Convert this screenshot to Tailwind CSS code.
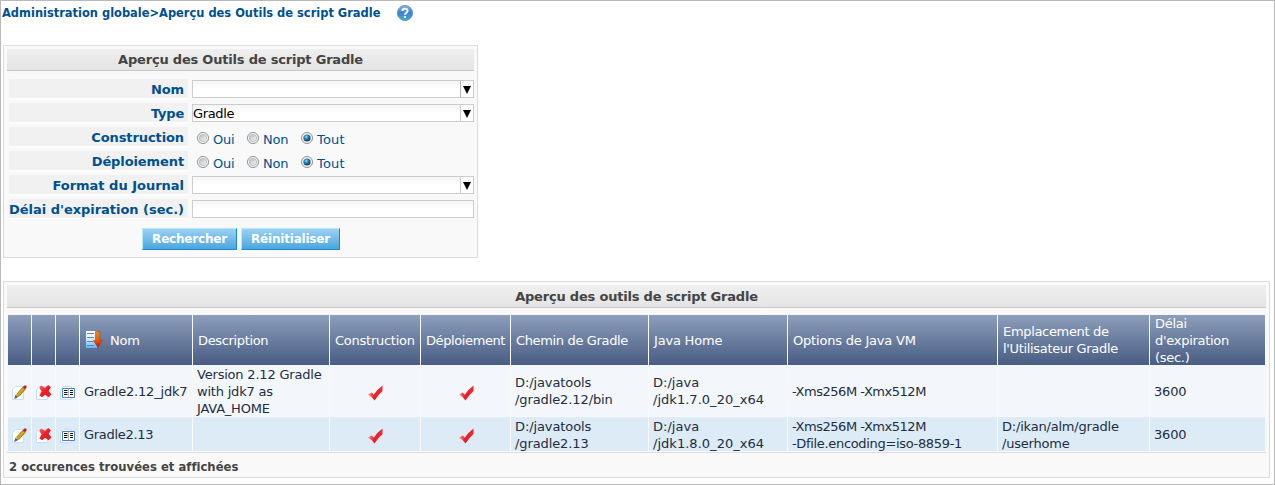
<!DOCTYPE html>
<html lang="fr">
<head>
<meta charset="utf-8">
<title>Aperçu des Outils de script Gradle</title>
<script src="https://cdn.jsdelivr.net/npm/@tailwindcss/browser@4"></script>
</head>
<body class="bg-white">
<svg class="block size-0">
  <defs>
    <linearGradient id="help" x1="0" y1="0" x2="0" y2="1"><stop offset="0" stop-color="#7fb4e4"/><stop offset=".5" stop-color="#3a83c8"/><stop offset="1" stop-color="#35b4ea"/></linearGradient>
    <linearGradient id="sheet" x1="0" y1="0" x2="0" y2="1"><stop offset="0" stop-color="#fff"/><stop offset=".4" stop-color="#e4f2fd"/><stop offset="1" stop-color="#62b5f5"/></linearGradient>
    <linearGradient id="arrow" x1="0" y1="0" x2="0" y2="1"><stop offset="0" stop-color="#e88a10"/><stop offset=".5" stop-color="#e8600a"/><stop offset="1" stop-color="#c81800"/></linearGradient>
    <linearGradient id="tick" x1="0" y1="0" x2="1" y2="0"><stop offset="0" stop-color="#f0a0a0"/><stop offset=".4" stop-color="#ee1c24"/><stop offset="1" stop-color="#ee2a30"/></linearGradient>
    <linearGradient id="cross" x1="0" y1="0" x2="1" y2="1"><stop offset="0" stop-color="#f06a6a"/><stop offset=".5" stop-color="#ee1c24"/><stop offset="1" stop-color="#d8282c"/></linearGradient>
    <linearGradient id="ring" x1="0" y1="0" x2="1" y2="1"><stop offset="0" stop-color="#b8bcc2"/><stop offset="1" stop-color="#f4f4f4"/></linearGradient>
    <radialGradient id="dot" cx=".4" cy=".35" r=".7"><stop offset="0" stop-color="#8fe0fa"/><stop offset=".4" stop-color="#2383b5"/><stop offset="1" stop-color="#0b2c50"/></radialGradient>
    <symbol id="i-edit" viewBox="0 0 16 16"><path d="M3.500 1.500h8v13h-11v-10z" fill="#fff" stroke="#c5e0f2"/><path d="M2.200 13.800l1.300-4 2.700 2-2 1.400z" fill="#6b5a48"/><path d="M4.600 9.300L10.800 2.300l2.300 2.200-6.200 7z" fill="#dba514" stroke="#8a6410" stroke-width=".8"/><path d="M10.800 2.300L12.300.500h2.200v2L13 4.400z" fill="#b3282d"/></symbol>
    <symbol id="i-del" viewBox="0 0 16 16"><path d="M3.500 1.500h8v13h-11v-10z" fill="#fff" stroke="#c5e0f2"/><path d="M5 .500l4 2.300L12.200 0l2.800 2.300-2.400 3.500 2.900 3.600-2.900 2.900-3.500-2.500-3 2.500-2.800-1.900L5.500 6.300 3.200 3z" fill="url(#cross)"/></symbol>
    <symbol id="i-book" viewBox="0 0 16 16"><path d="M3.500 1.500h8v13h-11v-10z" fill="#fff" stroke="#c5e0f2"/><path d="M2.500 3.500h12v9h-12z" fill="#fff" stroke="#4f7fc4"/><path d="M4 5.500h3.500M4 7.500h3.500M4 9.500h3.500M10 5.500h3M10 7.500h3M10 9.500h3" stroke="#111" stroke-width="1.200"/><path d="M8.500 4v8" stroke="#b9b4a4"/></symbol>
    <symbol id="i-tick" viewBox="0 0 16 16"><path d="M1 9.500L4.800 7.500l2 2.200Q10 4.500 15.500.500v5.500Q11.500 9.500 7.500 15.500Q4.500 11.500 1 9.500z" fill="url(#tick)"/></symbol>
    <symbol id="i-radio" viewBox="0 0 12 12"><circle cx="6" cy="6" r="5.500" fill="#fbfbfb" stroke="#8e8f8f"/><circle cx="6" cy="6" r="3.700" fill="url(#ring)" stroke="#b4b8bc" stroke-width=".8"/></symbol>
    <symbol id="i-radio-on" viewBox="0 0 12 12"><circle cx="6" cy="6" r="5.500" fill="#f4f4f4" stroke="#8e8f8f"/><circle cx="6" cy="6" r="3.600" fill="url(#dot)"/></symbol>
  </defs>
</svg>
<div class="w-[1275px] h-[485px] border border-[#b9b9b9] pl-[2px] font-['DejaVu_Sans',sans-serif] text-[13px] leading-[17px] tracking-[-0.2px] overflow-hidden whitespace-nowrap">
  <div class="flex h-[44px] items-start text-[11.45px] font-bold text-[#00508f] tracking-normal">
    <span class="mt-[4px] -ml-px w-[380px]">Administration globale&gt;Aperçu des Outils de script Gradle</span>
    <svg class="ml-[15px] mt-[4px] size-4" viewBox="0 0 16 16"><circle cx="8" cy="8" r="7.600" fill="url(#help)" stroke="#5d86ae" stroke-width=".8"/><path d="M5.500 6Q5.500 3.800 8 3.800T10.500 6Q10.500 7.200 9.200 7.900Q8 8.600 8 9.700" fill="none" stroke="#fff" stroke-width="2"/><path d="M7 11h2v2H7z" fill="#fff"/></svg>
  </div>

  <section class="w-[475px] h-[213px] border border-[#dcdcdc] bg-[#f9f9f9] p-[3px] text-[#00508f]">
    <h1 class="h-[22px] border-b border-[#c8c8c8] bg-linear-to-b from-[#efefef] to-[#e4e4e4] text-center font-bold text-[#444] leading-[21px]">Aperçu des Outils de script Gradle</h1>
    <div class="mt-[8px] ml-[2px] grid grid-cols-[179px_282px] gap-x-[4px] auto-rows-[24px]">
      <div class="h-[20px] border-b border-white bg-[#f1f1f1] pr-[4px] text-right font-bold leading-[21px] tracking-[-0.1px]">Nom</div>
      <div class="mt-px h-[18px] flex border border-[#ccc] bg-linear-to-b from-[#f5f5f5] to-white to-50%"><span class="flex-1"></span><span class="w-[13px] border-l border-[#b5b5b5] bg-white pl-[2px] pt-[5px]"><svg class="w-[8px] h-[8px]" viewBox="0 0 8 8"><path d="M0 0h8L4 8z"/></svg></span></div>
      <div class="h-[20px] border-b border-white bg-[#f1f1f1] pr-[4px] text-right font-bold leading-[21px] tracking-[-0.2px]">Type</div>
      <div class="mt-px h-[18px] flex border border-[#ccc] bg-linear-to-b from-[#f5f5f5] to-white to-50%"><span class="flex-1 text-black leading-[18px] tracking-[-0.35px]">Gradle</span><span class="w-[13px] border-l border-[#ccc] bg-white pl-[2px] pt-[5px]"><svg class="w-[8px] h-[8px]" viewBox="0 0 8 8"><path d="M0 0h8L4 8z"/></svg></span></div>
      <div class="h-[20px] border-b border-white bg-[#f1f1f1] pr-[4px] text-right font-bold leading-[21px] tracking-[-0.1px]">Construction</div>
      <div class="grid grid-cols-[50px_54px_auto] pl-[5px] leading-[26px]">
        <span class="flex"><svg class="size-3 mt-[5px] mr-1"><use href="#i-radio"/></svg>Oui</span><span class="flex"><svg class="size-3 mt-[5px] mr-1"><use href="#i-radio"/></svg>Non</span><span class="flex tracking-[0.2px]"><svg class="size-3 mt-[5px] mr-1"><use href="#i-radio-on"/></svg>Tout</span>
      </div>
      <div class="h-[20px] border-b border-white bg-[#f1f1f1] pr-[4px] text-right font-bold leading-[21px] tracking-[-0.1px]">Déploiement</div>
      <div class="grid grid-cols-[50px_54px_auto] pl-[5px] leading-[26px]">
        <span class="flex"><svg class="size-3 mt-[5px] mr-1"><use href="#i-radio"/></svg>Oui</span><span class="flex"><svg class="size-3 mt-[5px] mr-1"><use href="#i-radio"/></svg>Non</span><span class="flex tracking-[0.2px]"><svg class="size-3 mt-[5px] mr-1"><use href="#i-radio-on"/></svg>Tout</span>
      </div>
      <div class="h-[20px] border-b border-white bg-[#f1f1f1] pr-[4px] text-right font-bold leading-[21px] tracking-[-0.01px]">Format du Journal</div>
      <div class="mt-px h-[18px] flex border border-[#ccc] bg-linear-to-b from-[#f5f5f5] to-white to-50%"><span class="flex-1"></span><span class="w-[13px] border-l border-[#ccc] bg-white pl-[2px] pt-[5px]"><svg class="w-[8px] h-[8px]" viewBox="0 0 8 8"><path d="M0 0h8L4 8z"/></svg></span></div>
      <div class="h-[20px] border-b border-white bg-[#f1f1f1] pr-[4px] text-right font-bold leading-[21px] tracking-[-0.03px]">Délai d'expiration (sec.)</div>
      <div class="mt-px h-[18px] border border-[#ccc] bg-linear-to-b from-[#f5f5f5] to-white to-50%"></div>
    </div>
    <div class="mt-[5px] ml-[135px] flex gap-[4px] text-[12px] font-bold text-white text-center leading-[21px]">
      <div class="w-[95px] h-[22px] border border-t-[#b4e8fb] border-l-[#b4e8fb] border-r-[#2088cc] border-b-[#2088cc] bg-linear-to-b from-[#9bd1f2] to-[#48a6df]">Rechercher</div>
      <div class="w-[99px] h-[22px] border border-t-[#b4e8fb] border-l-[#b4e8fb] border-r-[#2088cc] border-b-[#2088cc] bg-linear-to-b from-[#9bd1f2] to-[#48a6df]">Réinitialiser</div>
    </div>
  </section>

  <section class="mt-[23px] w-[1267px] h-[197px] border border-[#dcdcdc] bg-[#f9f9f9] p-[3px] text-[#222d42]">
    <h2 class="h-[23px] border-b border-[#c8c8c8] bg-linear-to-b from-[#efefef] to-[#e4e4e4] text-center font-bold text-[#444] leading-[23px]">Aperçu des outils de script Gradle</h2>
    <div class="mt-[7px] ml-px w-[1257px] grid grid-cols-[23px_23px_23px_112px_136px_90px_89px_137px_138px_209px_151px_115px] grid-rows-[50px_50px_34px] gap-px *:flex *:items-center">
      <div class="bg-linear-to-b from-[#8e9fbc] to-[#495d83]"></div>
      <div class="bg-linear-to-b from-[#8e9fbc] to-[#495d83]"></div>
      <div class="bg-linear-to-b from-[#8e9fbc] to-[#495d83]"></div>
      <div class="bg-linear-to-b from-[#8e9fbc] to-[#495d83] pl-[6px] text-white"><svg class="w-[17px] h-[18px] mr-[7px] -mt-[2px]" viewBox="0 0 17 18"><path d="M0 1h11v17H0z" fill="url(#sheet)"/><path d="M1 3.500h7M1 7.500h7M1 11.500h6M1 15.500h7" stroke="#5b86bd"/><path d="M9.500 1.500h4.500v9h2.500L12 17.500 7.200 10.500h2.300z" fill="url(#arrow)" stroke="#a8380c" stroke-width=".5"/></svg>Nom</div>
      <div class="bg-linear-to-b from-[#8e9fbc] to-[#495d83] pl-[5px] text-white tracking-[-0.35px]">Description</div>
      <div class="bg-linear-to-b from-[#8e9fbc] to-[#495d83] pl-[5px] text-white tracking-[-0.25px]">Construction</div>
      <div class="bg-linear-to-b from-[#8e9fbc] to-[#495d83] pl-[5px] text-white tracking-[-0.4px]">Déploiement</div>
      <div class="bg-linear-to-b from-[#8e9fbc] to-[#495d83] pl-[5px] text-white tracking-[-0.35px]">Chemin de Gradle</div>
      <div class="bg-linear-to-b from-[#8e9fbc] to-[#495d83] pl-[5px] text-white">Java Home</div>
      <div class="bg-linear-to-b from-[#8e9fbc] to-[#495d83] pl-[5px] text-white">Options de Java VM</div>
      <div class="bg-linear-to-b from-[#8e9fbc] to-[#495d83] pl-[5px] text-white tracking-[-0.33px]">Emplacement de<br>l'Utilisateur Gradle</div>
      <div class="bg-linear-to-b from-[#8e9fbc] to-[#495d83] pl-[5px] text-white tracking-[-0.28px]">Délai<br>d'expiration<br>(sec.)</div>

      <div class="bg-[#f3f7fc] pl-[4px] pt-[4px]"><svg class="size-4"><use href="#i-edit"/></svg></div>
      <div class="bg-[#f3f7fc] pl-[4px] pt-[4px]"><svg class="size-4"><use href="#i-del"/></svg></div>
      <div class="bg-[#f3f7fc] pl-[4px] pt-[4px]"><svg class="size-4"><use href="#i-book"/></svg></div>
      <div class="bg-[#f3f7fc] pl-[4px]">Gradle2.12_jdk7</div>
      <div class="bg-[#f3f7fc] pl-[4px]">Version 2.12 Gradle<br>with jdk7 as<br>JAVA_HOME</div>
      <div class="bg-[#f3f7fc] justify-center pt-[3px]"><svg class="size-4"><use href="#i-tick"/></svg></div>
      <div class="bg-[#f3f7fc] justify-center pt-[3px]"><svg class="size-4"><use href="#i-tick"/></svg></div>
      <div class="bg-[#f3f7fc] pl-[4px] tracking-[-0.1px]">D:/javatools<br>/gradle2.12/bin</div>
      <div class="bg-[#f3f7fc] pl-[4px] tracking-[0.03px]">D:/java<br>/jdk1.7.0_20_x64</div>
      <div class="bg-[#f3f7fc] pl-[4px] tracking-[-0.47px]">-Xms256M -Xmx512M</div>
      <div class="bg-[#f3f7fc]"></div>
      <div class="bg-[#f3f7fc] pl-[4px]">3600</div>

      <div class="bg-[#ddebf6] pl-[4px] pt-[4px]"><svg class="size-4"><use href="#i-edit"/></svg></div>
      <div class="bg-[#ddebf6] pl-[4px] pt-[4px]"><svg class="size-4"><use href="#i-del"/></svg></div>
      <div class="bg-[#ddebf6] pl-[4px] pt-[4px]"><svg class="size-4"><use href="#i-book"/></svg></div>
      <div class="bg-[#ddebf6] pl-[4px] tracking-[-0.3px]">Gradle2.13</div>
      <div class="bg-[#ddebf6]"></div>
      <div class="bg-[#ddebf6] justify-center pt-[3px]"><svg class="size-4"><use href="#i-tick"/></svg></div>
      <div class="bg-[#ddebf6] justify-center pt-[3px]"><svg class="size-4"><use href="#i-tick"/></svg></div>
      <div class="bg-[#ddebf6] pl-[4px] pt-[2px] tracking-[-0.1px]">D:/javatools<br>/gradle2.13</div>
      <div class="bg-[#ddebf6] pl-[4px] pt-[2px] tracking-[0.03px]">D:/java<br>/jdk1.8.0_20_x64</div>
      <div class="bg-[#ddebf6] pl-[4px] pt-[2px]"><div><span class="tracking-[-0.47px]">-Xms256M -Xmx512M</span><br><span class="tracking-[-0.33px]">-Dfile.encoding=iso-8859-1</span></div></div>
      <div class="bg-[#ddebf6] pl-[4px] pt-[2px]">D:/ikan/alm/gradle<br>/userhome</div>
      <div class="bg-[#ddebf6] pl-[4px]">3600</div>
    </div>
    <div class="mt-px border-t border-[#dcdcdc] pl-[2px] text-[11.6px] font-bold text-[#444] leading-[29px] tracking-[0.03px]">2 occurences trouvées et affichées</div>
  </section>
</div>
</body>
</html>
